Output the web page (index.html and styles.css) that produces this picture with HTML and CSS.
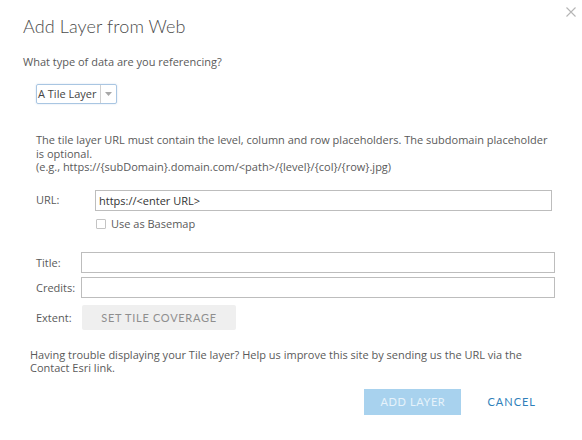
FILE: index.html
```html
<!DOCTYPE html>
<html>
<head>
<meta charset="utf-8">
<link rel="stylesheet" href="styles.css">
</head>
<body>
<div class="dialog">
  <div class="close" aria-label="Close">
    <svg width="10" height="10" viewBox="0 0 10 10"><path d="M0.5 0.5 L9.5 9.5 M9.5 0.5 L0.5 9.5" stroke="#b5b5b5" stroke-width="1.1" fill="none"/></svg>
  </div>
  <h1 class="title">Add Layer from Web</h1>
  <p class="question">What type of data are you referencing?</p>
  <div class="select">
    <span class="select-text">A Tile Layer</span>
    <span class="select-arrow"><svg width="7" height="4" viewBox="0 0 7 4"><path d="M0 0 H7 L3.5 4 Z" fill="#a8a8a8"/></svg></span>
  </div>
  <p class="hint">The tile layer URL must contain the level, column and row placeholders. The subdomain placeholder is optional.<br>(e.g., https://{subDomain}.domain.com/&lt;path&gt;/{level}/{col}/{row}.jpg)</p>

  <div class="url-row">
    <label class="url-label">URL:</label>
    <div class="url-field">
      <div class="input url-input">https://&lt;enter URL&gt;</div>
      <div class="check-row"><span class="checkbox"></span><span>Use as Basemap</span></div>
    </div>
  </div>

  <div class="meta">
    <div class="meta-row"><label class="meta-label">Title:</label><div class="input meta-input"></div></div>
    <div class="meta-row"><label class="meta-label">Credits:</label><div class="input meta-input"></div></div>
    <div class="meta-row extent"><label class="meta-label">Extent:</label><div class="btn-coverage">SET TILE COVERAGE</div></div>
  </div>

  <p class="trouble">Having trouble displaying your Tile layer? Help us improve this site by sending us the URL via the Contact Esri link.</p>

  <div class="actions">
    <div class="btn-add">ADD LAYER</div>
    <div class="btn-cancel">CANCEL</div>
  </div>
</div>
</body>
</html>
```

FILE: styles.css
```css
* { box-sizing: border-box; }
html, body { margin: 0; padding: 0; background: #fff; }
body {
  font-family: "Open Sans", "Noto Sans", sans-serif;
  color: #5a5a5a;
  font-size: 11px;
}
.dialog {
  position: relative;
  width: 582px;
  height: 440px;
  padding: 14px 27px 0 23px;
}
.close {
  position: absolute;
  top: 7px;
  left: 566px;
  width: 10px;
  height: 10px;
  line-height: 0;
}
.title {
  margin: 0;
  font-family: "Lato", sans-serif;
  font-size: 18px;
  font-weight: 300;
  line-height: 24px;
  color: #4c4c4c;
  letter-spacing: 0.1px;
}
.question {
  margin: 17px 0 0;
  line-height: 14px;
}
.select {
  margin: 15px 0 0 13px;
  display: inline-flex;
  align-items: stretch;
  height: 20px;
  border: 1px solid #a9c6e2;
  border-radius: 2px;
  box-shadow: 0 0 2px rgba(120,160,210,0.35);
}
.select-text {
  padding: 0 3px 0 1px;
  line-height: 18px;
  border-right: 1px solid #d0d0d0;
  color: #444;
}
.select-arrow {
  width: 15px;
  display: flex;
  align-items: center;
  justify-content: center;
}
.hint {
  margin: 29px 0 0 13px;
  line-height: 13.5px;
  width: 515px;
}
.url-row {
  display: flex;
  margin: 16px 0 0 13px;
}
.url-label { width: 59px; padding-top: 3px; line-height: 14px; }
.url-field { flex: 1; }
.input {
  border: 1px solid #bdbdbd;
  background: #fff;
  height: 21px;
}
.url-input {
  width: 457px;
  padding: 0 3px;
  line-height: 19px;
  color: #333;
}
.check-row {
  display: flex;
  align-items: center;
  margin-top: 7px;
  line-height: 12px;
}
.checkbox {
  width: 10px;
  height: 10px;
  border: 1px solid #c4c4c4;
  border-radius: 1px;
  margin: 0 5px 0 1px;
}
.meta {
  margin: 22px 0 0 13px;
  display: flex;
  flex-direction: column;
  gap: 4px;
}
.meta-row { display: flex; align-items: center; }
.meta-label { width: 45px; }
.meta-input { width: 474px; height: 21px; }
.extent { margin-top: 3px; }
.btn-coverage {
  margin-left: 1px;
  width: 154px;
  height: 25px;
  background: #efefef;
  border-radius: 2px;
  color: #8e8e8e;
  font-family: "Lato", sans-serif;
  font-size: 11px;
  letter-spacing: 0.7px;
  display: flex;
  align-items: center;
  justify-content: center;
}
.trouble {
  margin: 18px 0 0 7px;
  line-height: 13.5px;
  width: 505px;
}
.actions {
  display: flex;
  justify-content: flex-end;
  align-items: center;
  gap: 26px;
  margin-top: 14px;
  padding-right: 19px;
}
.btn-add {
  width: 97px;
  height: 26px;
  background: #a8d2ee;
  color: #e6f2fb;
  font-family: "Lato", sans-serif;
  font-size: 11px;
  letter-spacing: 0.6px;
  display: flex;
  align-items: center;
  justify-content: center;
}
.btn-cancel {
  color: #2f7fba;
  font-family: "Lato", sans-serif;
  font-size: 11px;
  letter-spacing: 1px;
}
```
